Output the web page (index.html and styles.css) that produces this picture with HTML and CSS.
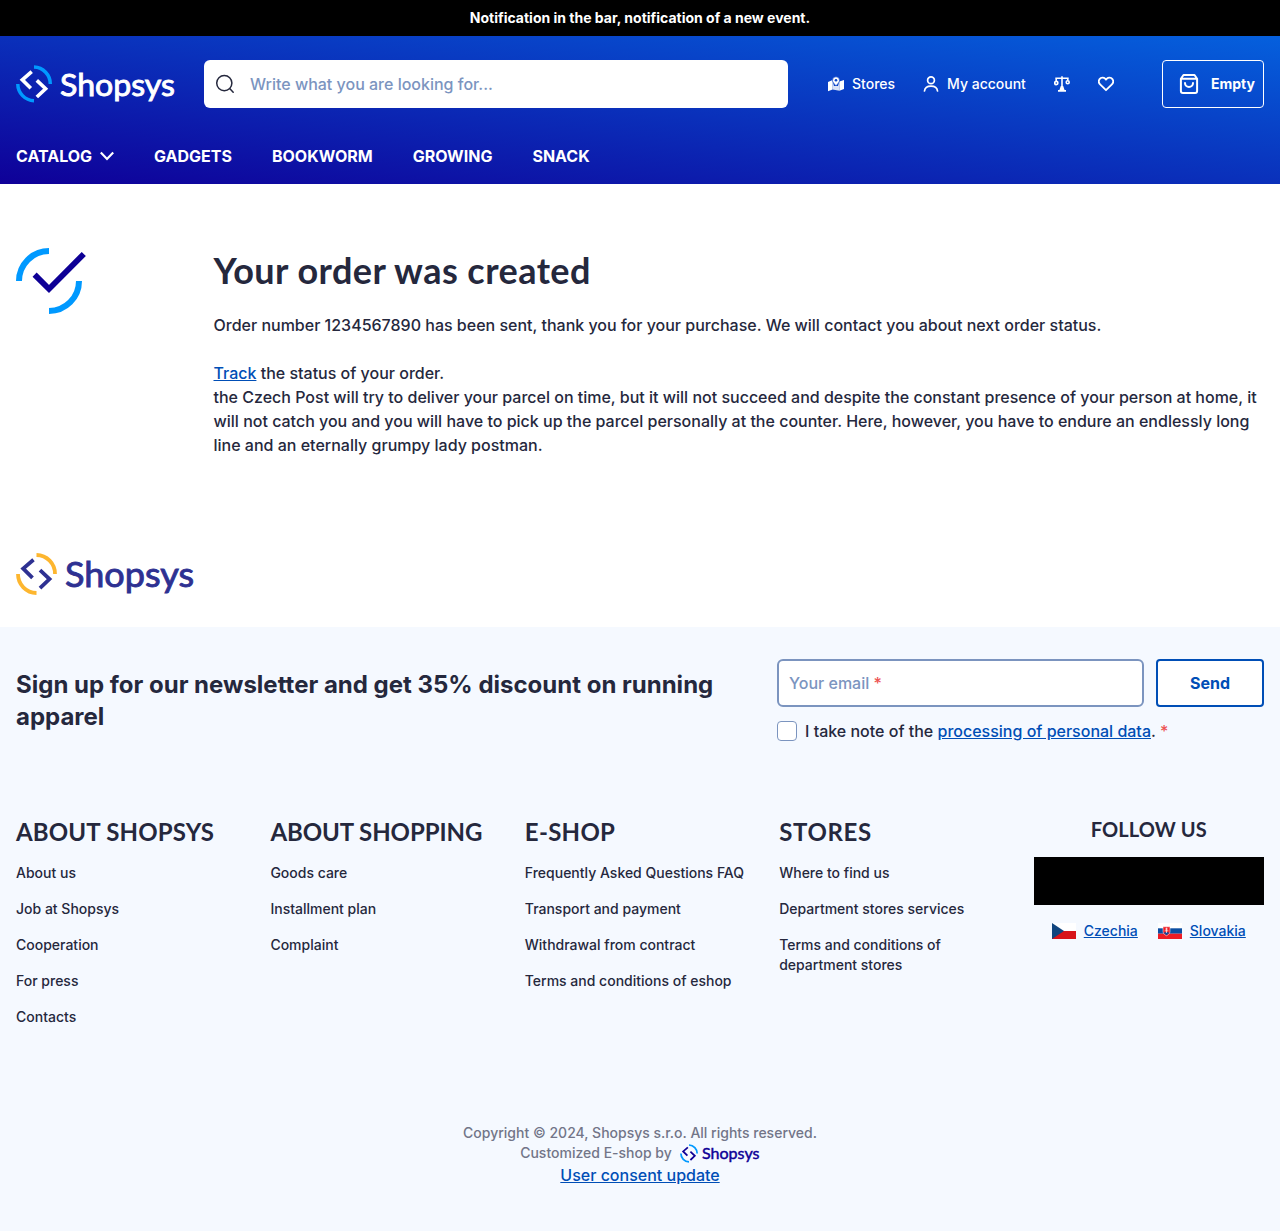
FILE: index.html
```html
<!DOCTYPE html>
<html lang="en">
<head>
<meta charset="utf-8">
<title>Your order was created | Shopsys</title>
<link rel="stylesheet" href="styles.css">
</head>
<body>
<div class="notice">Notification in the bar, notification of a new event.</div>
<header class="header">
  <div class="header-top">
    <svg class="logo" viewBox="0 0 160 38" width="160" height="38" role="img" aria-label="Shopsys">
      <g fill="none" stroke-width="3.5"><path stroke="#0099ff" d="M18 2A16.8 16.8 0 0 1 34.3 19M1.8 19A16.8 16.8 0 0 0 18 35.7"/><path stroke="#fff" stroke-width="3.6" d="M15.7 6.7L6.3 14.9L14.8 23.2M20.8 15.4L29.6 23.7L20.8 32"/></g>
      <text class="logo-text" x="44" y="30.6" font-size="31.5" textLength="115" lengthAdjust="spacingAndGlyphs" fill="#fff" stroke="#fff">Shopsys</text>
    </svg>
    <div class="search">
      <svg viewBox="0 0 20 20" width="20" height="20" fill="none" stroke="#25283d" stroke-width="1.5" stroke-linecap="round"><circle cx="9.3" cy="9.1" r="7.6"/><path d="M14.9 14.7L18.2 18.2"/></svg>
      <span>Write what you are looking for...</span>
    </div>
    <div class="user-menu">
      <a class="stores"><svg viewBox="0 0 16 16" width="16" height="16"><path fill="#fff" d="M0 6L4.6 4V13.4L0 15.2zM11.4 5.5L16 4V13L11.4 14.8z"/><path fill="#fff" opacity=".85" d="M4.6 5L6 10H10L11.4 5V14.8L4.6 13.4z"/><path fill="#fff" stroke="#0842c7" stroke-width=".6" d="M8 .8a3.5 3.5 0 0 0-3.5 3.6c0 2 2 3.2 3.5 5.6 1.5-2.4 3.5-3.6 3.5-5.6A3.5 3.5 0 0 0 8 .8z"/><circle cx="8" cy="4.3" r="1.3" fill="#0842c7"/></svg>Stores</a>
      <a class="account"><svg viewBox="0 0 16 16" width="16" height="16" fill="none" stroke="#fff" stroke-width="1.7" stroke-linecap="round"><circle cx="8" cy="4.3" r="3.4"/><path d="M1.5 15c.3-3 2.6-4.8 6.5-4.8s6.2 1.8 6.5 4.8"/></svg>My account</a>
      <a class="compare"><svg viewBox="0 0 16 16" width="16" height="16" fill="none" stroke="#fff" stroke-width="1.6"><path d="M8 .3V11M1.3 2.2H14.7M2.2 2.5V5M13.8 2.5V4.5"/><circle cx="2.3" cy="7" r="1.6"/><circle cx="13.7" cy="6.3" r="1.5"/><path fill="#fff" stroke="none" d="M6.8 10H9.2L10.6 14H12V15.8H4V14H5.4z"/></svg></a>
      <a class="wishlist"><svg viewBox="0 0 16 16" width="16" height="16" fill="none" stroke="#fff" stroke-width="1.8" stroke-linejoin="round"><path d="M8 14.2L2.1 8.3C.8 7 .5 4.7 1.6 3.1 3 1.2 5.7 1.2 7.1 2.7L8 3.7l.9-1c1.4-1.5 4.1-1.5 5.5.4 1.1 1.6.8 3.9-.5 5.2z"/></svg></a>
      <a class="cart"><svg viewBox="0 0 20 20" width="20" height="20" fill="none" stroke="#fff" stroke-width="2" stroke-linecap="round" stroke-linejoin="round"><path d="M1.9 4.7L4.5 1H15.5L18.1 4.7V17a2 2 0 0 1-2 2H3.9a2 2 0 0 1-2-2zM1.9 4.8H18.1M6 9a4 4 0 0 0 8 0"/></svg>Empty</a>
    </div>
  </div>
  <nav class="nav">
    <a>CATALOG<svg viewBox="0 0 14 10" width="14" height="10" fill="none" stroke="#fff" stroke-width="2.2"><path d="M.8 1.6L7 7.9L13.2 1.6"/></svg></a><a>GADGETS</a><a>BOOKWORM</a><a>GROWING</a><a>SNACK</a>
  </nav>
</header>
<main class="confirmation">
  <svg viewBox="0 0 70 66" width="70" height="66" fill="none" stroke-width="6"><path stroke="#0099ff" d="M3 33A30 30 0 0 1 33 3M63 33A30 30 0 0 1 33 63"/><path stroke="#0e0096" stroke-width="5.8" d="M18.6 26.6L33 41L67.8 6"/></svg>
  <div class="confirmation-text">
    <h1>Your order was created</h1>
    <p>Order number 1234567890 has been sent, thank you for your purchase. We will contact you about next order status.</p>
    <p><a class="link">Track</a> the status of your order.<br>the Czech Post will try to deliver your parcel on time, but it will not succeed and despite the constant presence of your person at home, it will not catch you and you will have to pick up the parcel personally at the counter. Here, however, you have to endure an endlessly long line and an eternally grumpy lady postman.</p>
  </div>
</main>
<div class="brand">
  <svg class="logo" viewBox="0 0 180 43" width="180" height="43" role="img" aria-label="Shopsys">
    <g fill="none" stroke-width="3.8"><path stroke="#fdb62f" d="M20.5 2A18.8 18.8 0 0 1 39 21M2 21A18.8 18.8 0 0 0 20.5 40"/><path stroke="#2e3192" d="M17.5 6.7L7.2 15.5L16.5 24.8M24 17.2L33.5 26L24 35.2"/></g>
    <text class="logo-text" x="49" y="33.5" font-size="34.5" textLength="129" lengthAdjust="spacingAndGlyphs" fill="#2e3192" stroke="#2e3192">Shopsys</text>
  </svg>
</div>
<footer class="footer">
  <section class="newsletter">
    <h2>Sign up for our newsletter and get 35% discount on running apparel</h2>
    <div class="newsletter-form">
      <div class="fields"><div class="email">Your email <i>*</i></div><button>Send</button></div>
      <div class="consent"><span class="checkbox"></span><span>I take note of the <a class="link">processing of personal data</a>. <i>*</i></span></div>
    </div>
  </section>
  <section class="columns">
    <div><h3 class="about">ABOUT SHOPSYS</h3><ul><li>About us</li><li>Job at Shopsys</li><li>Cooperation</li><li>For press</li><li>Contacts</li></ul></div>
    <div><h3>ABOUT SHOPPING</h3><ul><li>Goods care</li><li>Installment plan</li><li>Complaint</li></ul></div>
    <div><h3 class="eshop">E-SHOP</h3><ul><li>Frequently Asked Questions FAQ</li><li>Transport and payment</li><li>Withdrawal from contract</li><li>Terms and conditions of eshop</li></ul></div>
    <div><h3 class="stores-title">STORES</h3><ul><li>Where to find us</li><li>Department stores services</li><li>Terms and conditions of department stores</li></ul></div>
    <div class="follow">
      <h4>FOLLOW US</h4>
      <div class="social"></div>
      <div class="countries">
        <a><svg viewBox="0 0 24 16" width="24" height="16"><path fill="#fff" d="M0 0H24V8H0z"/><path fill="#d7141a" d="M0 8H24V16H0z"/><path fill="#11457e" d="M0 0L12 8L0 16z"/></svg><span class="link">Czechia</span></a>
        <a><svg viewBox="0 0 24 16" width="24" height="16"><path fill="#fff" d="M0 0H24V6H0z"/><path fill="#0b4ea2" d="M0 5.3H24V10.7H0z"/><path fill="#ee1c25" d="M0 10.7H24V16H0z"/><path fill="#ee1c25" stroke="#fff" stroke-width=".5" d="M5 3.8H12V8.5C12 10.8 10 12 8.5 12.7C7 12 5 10.8 5 8.5z"/><path fill="#0b4ea2" d="M5.8 10C7 8.8 10 8.8 11.2 10L8.5 12.2z"/><path stroke="#fff" stroke-width=".7" d="M8.5 4.7V10M7.2 6H9.8M6.7 7.8H10.3"/></svg><span class="link">Slovakia</span></a>
      </div>
    </div>
  </section>
  <div class="copyright">
    <div>Copyright © 2024, Shopsys s.r.o. All rights reserved.</div>
    <div class="by">Customized E-shop by
      <svg class="logo" viewBox="0 0 160 38" width="80" height="19" role="img" aria-label="Shopsys"><g fill="none" stroke-width="3.5"><path stroke="#0099ff" d="M18 2A16.8 16.8 0 0 1 34.3 19M1.8 19A16.8 16.8 0 0 0 18 35.7"/><path stroke="#0e0096" d="M15.7 6.7L6.3 14.9L14.8 23.2M20.8 15.4L29.6 23.7L20.8 32"/></g><text class="logo-text" x="44" y="30.6" font-size="31.5" textLength="115" lengthAdjust="spacingAndGlyphs" fill="#0e0096" stroke="#0e0096">Shopsys</text></svg>
    </div>
    <a class="link">User consent update</a>
  </div>
</footer>
</body>
</html>
```
FILE: styles.css
```css
* { box-sizing: border-box; }
body { margin: 0; font: 500 16px/24px Inter, sans-serif; color: #25283d; background: #fff; }
h1, h2, h3, h4, p, ul { margin: 0; padding: 0; }
ul { list-style: none; }
svg { display: block; flex: none; }
i { font-style: normal; color: #ed5353; }
.logo { overflow: visible; }
.logo-text { font-family: Lato, sans-serif; font-weight: 400; stroke-width: .9; }
.link { color: #004eb6; text-decoration: underline; }

.notice { height: 36px; background: #000; color: #fff; text-align: center; font-size: 14px; line-height: 36px; font-weight: 700; }

.header { height: 148px; padding: 24px 16px 0; color: #fff; background: linear-gradient(to top right, #0f0098, #0560dd); }
.header-top { display: flex; align-items: center; height: 48px; }
.search { display: flex; align-items: center; gap: 15px; width: 584px; height: 48px; margin-left: 28px; padding-left: 11px; border-radius: 6px; background: #fff; color: #7b94bf; }
.user-menu { flex: 1; display: flex; align-items: center; margin-left: 40px; font-size: 14px; }
.user-menu a { display: flex; align-items: center; gap: 8px; white-space: nowrap; }
.account, .compare, .wishlist { margin-left: 28px; }
.user-menu .cart { width: 102px; height: 48px; margin-left: auto; padding-left: 16px; gap: 12px; border: 1px solid #fff; border-radius: 4px; font-weight: 700; }
.nav { display: flex; gap: 40px; margin-top: 36px; font-weight: 700; }
.nav a { display: flex; align-items: center; gap: 8px; }

.confirmation { display: flex; gap: 127.5px; padding: 64px 16px 0; }
.confirmation-text { flex: 1; }
h1 { font: 700 36px/44px Lato, sans-serif; letter-spacing: .45px; }
.confirmation-text p { margin-bottom: 24px; }
h1 + p { margin-top: 21px; }
.brand { padding: 72px 16px 31px; }

.footer { height: 604px; padding: 32px 16px 0; background: #f5f9ff; }
.newsletter { display: flex; justify-content: space-between; height: 158px; }
.newsletter h2 { width: 720px; padding-top: 10px; font-size: 24px; line-height: 32px; font-weight: 700; }
.newsletter-form { width: 487px; }
.fields { display: flex; gap: 12px; height: 48px; }
.email { flex: 1; padding-left: 10px; border: 2px solid #7b94bf; border-radius: 6px; background: #fff; color: #7b94bf; line-height: 44px; }
.fields button { width: 108px; border: 2px solid #004eb6; border-radius: 4px; background: #fff; color: #004eb6; font: 700 16px Inter, sans-serif; }
.consent { display: flex; align-items: center; gap: 8px; margin-top: 12px; }
.checkbox { width: 20px; height: 20px; border: 1px solid #7b94bf; border-radius: 4px; background: #fff; }
.columns { display: grid; grid-template-columns: repeat(5, minmax(0, 1fr)); gap: 24px; height: 306px; font-size: 14px; line-height: 20px; }
h3 { font: 700 24px/30px Lato, sans-serif; letter-spacing: -.08px; white-space: nowrap; }
.about { letter-spacing: .17px; }
.eshop { letter-spacing: .3px; }
.stores-title { letter-spacing: .65px; }
.columns ul { margin-top: 16px; display: grid; gap: 16px; }
.follow { text-align: center; }
h4 { font: 700 20px/24px Lato, sans-serif; letter-spacing: .12px; }
.social { height: 48px; margin: 16px 0; background: #000; }
.countries { display: flex; justify-content: center; gap: 20px; }
.countries a { display: flex; align-items: center; gap: 8px; }
.copyright { display: flex; flex-direction: column; align-items: center; font-size: 14px; line-height: 20px; color: #727588; }
.by { display: flex; align-items: center; gap: 8px; }
.copyright .link { font-size: 16px; line-height: 24px; }
```
